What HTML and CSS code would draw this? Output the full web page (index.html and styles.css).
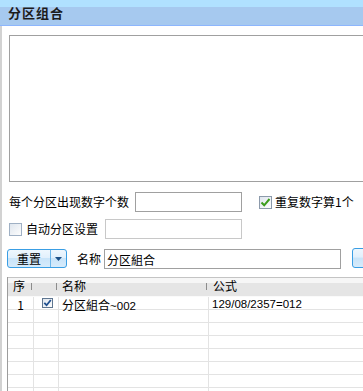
FILE: index.html
```html
<!DOCTYPE html>
<html lang="zh-CN">

<head>
    <meta charset="UTF-8">
    <meta name="viewport" content="width=device-width, initial-scale=1.0">
    <title>分区组合</title>
    <link rel="stylesheet" href="styles.css">
</head>

<body>

    <div class="window">
        <!-- Title Bar -->
        <div class="titlebar">分区组合</div>

        <div class="content">
            <textarea class="editor"></textarea>

            <!-- Options -->
            <div class="row row-count">
                <span class="label label-count">每个分区出现数字个数</span>
                <input type="text" class="field field-count">
                <span class="check check-green">
                    <svg width="11" height="11" viewBox="0 0 11 11"><path d="M1.5 5.5 L4.2 8.3 L9.5 2" fill="none" stroke="#3b9c1c" stroke-width="2"/></svg>
                </span>
                <span class="label label-repeat">重复数字算1个</span>
                <span class="check check-edge"></span>
            </div>

            <div class="row row-auto">
                <span class="check"></span>
                <span class="label label-auto">自动分区设置</span>
                <input type="text" class="field field-auto" disabled>
            </div>

            <div class="row row-name">
                <div class="split-button">
                    <span class="split-main">重置</span>
                    <span class="split-arrow">
                        <svg width="7" height="4" viewBox="0 0 7 4"><path d="M0 0 H7 L3.5 4 Z" fill="#1b4f86"/></svg>
                    </span>
                </div>
                <span class="label label-name">名称</span>
                <input type="text" class="field field-name" value="分区組合">
                <div class="blue-button"></div>
            </div>

            <!-- List -->
            <div class="grid">
                <div class="grid-head">序</div>
                <div class="grid-head"></div>
                <div class="grid-head">名称</div>
                <div class="grid-head">公式</div>

                <div class="cell cell-center">1</div>
                <div class="cell cell-center cell-check">
                    <span class="check check-small">
                        <svg width="9" height="8" viewBox="0 0 9 8"><path d="M1.3 3.8 L3.6 6.2 L7.8 1" fill="none" stroke="#21508f" stroke-width="1.8"/></svg>
                    </span>
                </div>
                <div class="cell">分区組合<span class="num">~002</span></div>
                <div class="cell num">129/08/2357=012</div>

                <div class="cell"></div><div class="cell"></div><div class="cell"></div><div class="cell"></div>
                <div class="cell"></div><div class="cell"></div><div class="cell"></div><div class="cell"></div>
                <div class="cell"></div><div class="cell"></div><div class="cell"></div><div class="cell"></div>
                <div class="cell"></div><div class="cell"></div><div class="cell"></div><div class="cell"></div>
                <div class="cell"></div><div class="cell"></div><div class="cell"></div><div class="cell"></div>
                <div class="cell"></div><div class="cell"></div><div class="cell"></div><div class="cell"></div>
                <div class="cell"></div><div class="cell"></div><div class="cell"></div><div class="cell"></div>
            </div>
        </div>
    </div>

</body>

</html>
```

FILE: styles.css
```css
/* General Styling */
body {
    margin: 0;
    font-family: "Noto Sans CJK SC", "Liberation Sans", sans-serif;
    font-size: 12px;
    color: #000;
    background-color: #fff;
    overflow: hidden;
}

.window {
    width: 363px;
    height: 391px;
    overflow: hidden;
}

/* Title Bar */
.titlebar {
    height: 25px;
    line-height: 25px;
    padding-left: 8px;
    font-size: 13px;
    font-weight: bold;
    letter-spacing: 1px;
    color: #1c1c1c;
    background: linear-gradient(#b0e1ff 0, #b0e1ff 7px, #a6c9ef 7px);
    border-bottom: 1px solid #8db6fd;
}

.content {
    width: 700px;
    height: 365px;
    padding: 9px 0 0 7px;
    border-left: 2px solid #d2d2d2;
    box-sizing: border-box;
}

.editor {
    display: block;
    width: 500px;
    height: 147px;
    margin: 0;
    padding: 0;
    border: 1px solid #a0a0a0;
    box-sizing: border-box;
    resize: none;
}

/* Rows */
.row {
    display: flex;
    align-items: center;
    height: 20px;
    white-space: nowrap;
}

.row-count {
    margin-top: 10px;
}

.row-auto {
    margin-top: 7px;
}

.row-name {
    margin-top: 10px;
    align-items: flex-start;
}

.label {
    flex: none;
    line-height: 20px;
}

.field {
    flex: none;
    height: 20px;
    margin: 0;
    padding: 0 2px;
    border: 1px solid #a0a0a0;
    box-sizing: border-box;
    font-family: "Noto Sans CJK SC", sans-serif;
    font-size: 12px;
    background-color: #fff;
}

.field-count {
    width: 107px;
    margin-left: 6px;
}

.field-auto {
    width: 137px;
    margin-left: 7px;
    border-color: #c8c8c8;
}

.field-name {
    width: 237px;
    margin-left: 3px;
}

.label-repeat {
    margin-left: 3px;
}

.label-auto {
    margin-left: 4px;
}

.label-name {
    margin-left: 10px;
}

/* Checkboxes */
.check {
    flex: none;
    display: flex;
    align-items: center;
    justify-content: center;
    width: 13px;
    height: 13px;
    border: 1px solid #9fb0c4;
    box-sizing: border-box;
    background: linear-gradient(135deg, #dfe6ee, #fdfdfd);
}

.check-green {
    margin-left: 17px;
    border-color: #8c9aab;
}

.check-edge {
    margin-left: 9px;
    border-color: #a8a8a8;
    border-radius: 3px;
}

.check-small {
    display: inline-flex;
    width: 11px;
    height: 10px;
    border-color: #5f7690;
    vertical-align: top;
}

/* Buttons */
.split-button {
    flex: none;
    display: flex;
    width: 60px;
    height: 19px;
    margin-left: -2px;
    border: 1px solid #3a9ee4;
    border-radius: 3px;
    box-sizing: border-box;
    background: linear-gradient(#eef7fe 0, #e2f0fc 45%, #c9e4f9 50%, #d6ebfb 100%);
}

.split-main {
    width: 42px;
    line-height: 17px;
    text-align: center;
    border-right: 1px solid #6cb5e9;
}

.split-arrow {
    flex: 1;
    display: flex;
    align-items: center;
    justify-content: center;
}

.blue-button {
    flex: none;
    width: 60px;
    height: 20px;
    margin-left: 11px;
    margin-top: -1px;
    border: 1px solid #3a9ee4;
    border-radius: 3px;
    box-sizing: border-box;
    background: linear-gradient(#eef7fe 0, #e2f0fc 45%, #c9e4f9 50%, #d6ebfb 100%);
}

/* List */
.grid {
    display: grid;
    grid-template-columns: 26px 25px 150px 300px;
    grid-template-rows: 20px;
    grid-auto-rows: 13px;
    width: 501px;
    margin-top: 8px;
    margin-left: -2px;
    border-left: 1px solid #9c9c9c;
}

.grid-head {
    position: relative;
    height: 20px;
    padding-left: 4px;
    line-height: 16px;
    border-top: 1px solid #c4c4c4;
    box-sizing: border-box;
    background: linear-gradient(#f6f6f6 0, #f6f6f6 5px, #e5e5e5 5px, #e5e5e5 18px, #fafafa 18px);
}

.grid-head:nth-child(1) {
    padding-left: 5px;
}

.grid-head:nth-child(3) {
    padding-left: 3px;
}

.grid-head::after {
    content: "";
    position: absolute;
    right: 2px;
    top: 5px;
    width: 1px;
    height: 7px;
    background-color: #8c8c8c;
}

.grid-head:nth-child(4)::after {
    display: none;
}

.cell {
    padding: 2px 0 0 3px;
    line-height: 11px;
    border-right: 1px solid #e3e3e3;
    border-bottom: 1px solid #e3e3e3;
    box-sizing: border-box;
    white-space: nowrap;
    overflow: visible;
}

.cell-center {
    padding-left: 0;
    text-align: center;
}

.cell-check {
    padding: 1px 0 0 3px;
}

.num {
    font-family: "Liberation Sans", sans-serif;
    font-size: 11.5px;
}
```
